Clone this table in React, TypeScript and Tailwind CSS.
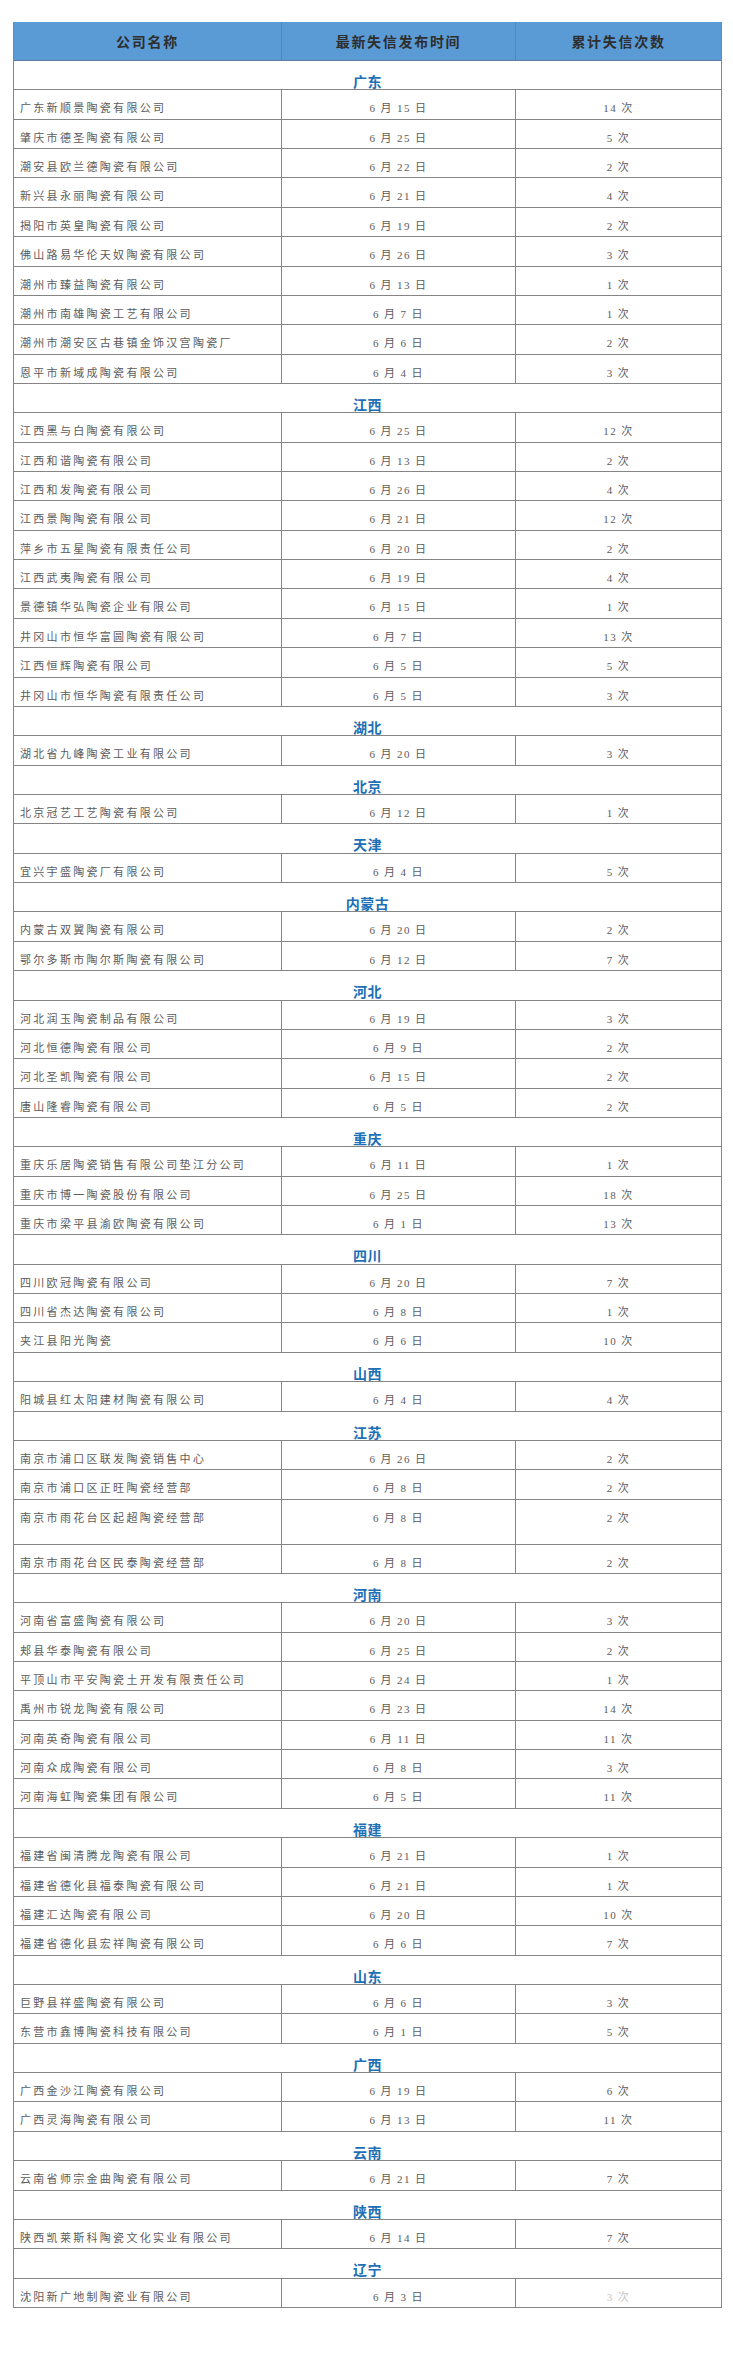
import React from 'react';

type Row = [string, number, number];
type Section = { region: string; rows: Row[] };

// 各省份失信陶瓷企业数据
const sections: Section[] = [
  {
    region: '广东',
    rows: [
      ['广东新顺景陶瓷有限公司', 15, 14],
      ['肇庆市德圣陶瓷有限公司', 25, 5],
      ['潮安县欧兰德陶瓷有限公司', 22, 2],
      ['新兴县永丽陶瓷有限公司', 21, 4],
      ['揭阳市英皇陶瓷有限公司', 19, 2],
      ['佛山路易华伦天奴陶瓷有限公司', 26, 3],
      ['潮州市臻益陶瓷有限公司', 13, 1],
      ['潮州市南雄陶瓷工艺有限公司', 7, 1],
      ['潮州市潮安区古巷镇金饰汉宫陶瓷厂', 6, 2],
      ['恩平市新域成陶瓷有限公司', 4, 3],
    ],
  },
  {
    region: '江西',
    rows: [
      ['江西黑与白陶瓷有限公司', 25, 12],
      ['江西和谐陶瓷有限公司', 13, 2],
      ['江西和发陶瓷有限公司', 26, 4],
      ['江西景陶陶瓷有限公司', 21, 12],
      ['萍乡市五星陶瓷有限责任公司', 20, 2],
      ['江西武夷陶瓷有限公司', 19, 4],
      ['景德镇华弘陶瓷企业有限公司', 15, 1],
      ['井冈山市恒华富圆陶瓷有限公司', 7, 13],
      ['江西恒辉陶瓷有限公司', 5, 5],
      ['井冈山市恒华陶瓷有限责任公司', 5, 3],
    ],
  },
  { region: '湖北', rows: [['湖北省九峰陶瓷工业有限公司', 20, 3]] },
  { region: '北京', rows: [['北京冠艺工艺陶瓷有限公司', 12, 1]] },
  { region: '天津', rows: [['宜兴宇盛陶瓷厂有限公司', 4, 5]] },
  {
    region: '内蒙古',
    rows: [
      ['内蒙古双翼陶瓷有限公司', 20, 2],
      ['鄂尔多斯市陶尔斯陶瓷有限公司', 12, 7],
    ],
  },
  {
    region: '河北',
    rows: [
      ['河北润玉陶瓷制品有限公司', 19, 3],
      ['河北恒德陶瓷有限公司', 9, 2],
      ['河北圣凯陶瓷有限公司', 15, 2],
      ['唐山隆睿陶瓷有限公司', 5, 2],
    ],
  },
  {
    region: '重庆',
    rows: [
      ['重庆乐居陶瓷销售有限公司垫江分公司', 11, 1],
      ['重庆市博一陶瓷股份有限公司', 25, 18],
      ['重庆市梁平县渝欧陶瓷有限公司', 1, 13],
    ],
  },
  {
    region: '四川',
    rows: [
      ['四川欧冠陶瓷有限公司', 20, 7],
      ['四川省杰达陶瓷有限公司', 8, 1],
      ['夹江县阳光陶瓷', 6, 10],
    ],
  },
  { region: '山西', rows: [['阳城县红太阳建材陶瓷有限公司', 4, 4]] },
  {
    region: '江苏',
    rows: [
      ['南京市浦口区联发陶瓷销售中心', 26, 2],
      ['南京市浦口区正旺陶瓷经营部', 8, 2],
      ['南京市雨花台区起超陶瓷经营部', 8, 2],
      ['南京市雨花台区民泰陶瓷经营部', 8, 2],
    ],
  },
  {
    region: '河南',
    rows: [
      ['河南省富盛陶瓷有限公司', 20, 3],
      ['郏县华泰陶瓷有限公司', 25, 2],
      ['平顶山市平安陶瓷土开发有限责任公司', 24, 1],
      ['禹州市锐龙陶瓷有限公司', 23, 14],
      ['河南英奇陶瓷有限公司', 11, 11],
      ['河南众成陶瓷有限公司', 8, 3],
      ['河南海虹陶瓷集团有限公司', 5, 11],
    ],
  },
  {
    region: '福建',
    rows: [
      ['福建省闽清腾龙陶瓷有限公司', 21, 1],
      ['福建省德化县福泰陶瓷有限公司', 21, 1],
      ['福建汇达陶瓷有限公司', 20, 10],
      ['福建省德化县宏祥陶瓷有限公司', 6, 7],
    ],
  },
  {
    region: '山东',
    rows: [
      ['巨野县祥盛陶瓷有限公司', 6, 3],
      ['东营市鑫博陶瓷科技有限公司', 1, 5],
    ],
  },
  {
    region: '广西',
    rows: [
      ['广西金沙江陶瓷有限公司', 19, 6],
      ['广西灵海陶瓷有限公司', 13, 11],
    ],
  },
  { region: '云南', rows: [['云南省师宗金曲陶瓷有限公司', 21, 7]] },
  { region: '陕西', rows: [['陕西凯莱斯科陶瓷文化实业有限公司', 14, 7]] },
  { region: '辽宁', rows: [['沈阳新广地制陶瓷业有限公司', 3, 3]] },
];

const font = { fontFamily: '"Liberation Serif", "Noto Sans CJK SC", serif' };
const headFont = { fontFamily: '"Noto Sans CJK SC", sans-serif' };

const DataRow = ({ row, tall, last }: { row: Row; tall?: boolean; last?: boolean }) => {
  const [name, day, count] = row;
  return (
    <div
      className={`grid grid-cols-[268px_234px_1fr] border-b border-[#858585] text-[11px] leading-none text-[#5c5c5c] ${
        tall ? 'h-[45px]' : 'h-[29.36px]'
      }`}
      style={font}
    >
      <div className="border-r border-[#858585] pl-[6px] pt-[13px] tracking-[2.3px] whitespace-nowrap">{name}</div>
      <div className="border-r border-[#858585] pt-[13px] text-center tracking-[1.4px]">
        6 月 {day} 日
      </div>
      <div className={`pt-[13px] text-center tracking-[1.4px] ${last ? 'text-[#c4c4c4]' : ''}`}>{count} 次</div>
    </div>
  );
};

const App: React.FC = () => {
  return (
    <div className="min-h-[2355px] bg-white pt-[22px] pl-[13px]">
      <div className="w-[709px] border-x border-[#858585]">
        {/* 表头 */}
        <div
          className="grid h-[39px] grid-cols-[268px_234px_1fr] border-b border-[#5f7c98] bg-[#5b9bd5] text-[14px] font-bold tracking-[1.7px] text-[#2e2e2e]"
          style={headFont}
        >
          <div className="flex items-center justify-center border-r border-[#4f89bd]">公司名称</div>
          <div className="flex items-center justify-center border-r border-[#4f89bd]">最新失信发布时间</div>
          <div className="flex items-center justify-center">累计失信次数</div>
        </div>

        {sections.map((s, si) => (
          <div key={s.region}>
            <div
              className="h-[29.36px] border-b border-[#858585] pt-[13px] text-center text-[14px] font-bold leading-none tracking-[0.5px] text-[#1d6fb6]"
              style={headFont}
            >
              {s.region}
            </div>
            {s.rows.map((r, ri) => (
              <DataRow
                key={r[0]}
                row={r}
                tall={r[0] === '南京市雨花台区起超陶瓷经营部'}
                last={si === sections.length - 1 && ri === s.rows.length - 1}
              />
            ))}
          </div>
        ))}
      </div>
    </div>
  );
};

export default App;
